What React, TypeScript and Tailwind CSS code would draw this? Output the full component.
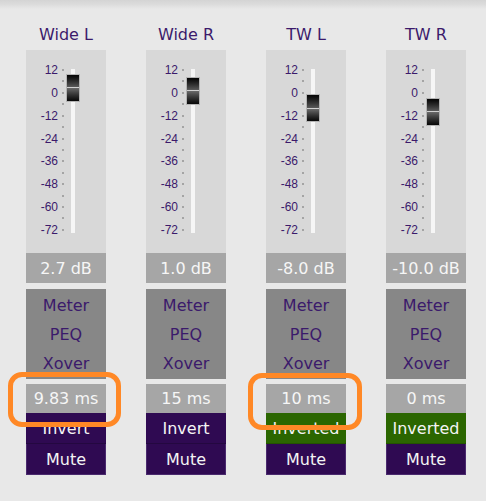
import React from 'react';

interface Channel {
  name: string;
  gain: number;
  delay: string;
  inverted: boolean;
}

const channels: Channel[] = [
  { name: 'Wide L', gain: 2.7, delay: '9.83 ms', inverted: false },
  { name: 'Wide R', gain: 1.0, delay: '15 ms', inverted: false },
  { name: 'TW L', gain: -8.0, delay: '10 ms', inverted: true },
  { name: 'TW R', gain: -10.0, delay: '0 ms', inverted: true },
];

const ticks = Array.from({ length: 15 }, (_, i) => (i % 2 === 0 ? String(12 - i * 6) : null));

const SCALE_H = 160;

function Fader({ gain }: { gain: number }) {
  // 12 dB at top, -72 dB at bottom
  const y = ((12 - gain) / 84) * SCALE_H;
  return (
    <div className="h-[203px] w-[80px] bg-[#d8d8d8] pt-[20px]">
      <div className="flex">
        <div className="flex h-[160px] w-[38px] flex-col justify-between">
          {ticks.map((label, i) => (
            <div key={i} className="flex h-0 items-center justify-end">
              {label && (
                <span className="mr-[4px] text-[12px] leading-none text-[#3b1a6b] [font-family:'Liberation_Sans',Arial,sans-serif]">
                  {label}
                </span>
              )}
              <span className="h-[2px] w-[2px] bg-[#a4a4a4]" />
            </div>
          ))}
        </div>
        <div className="relative ml-[7px] -mt-[1px] h-[164px] w-[4px] bg-[#f6f6f6]">
          <div
            className="absolute left-[-5px] flex h-[28px] w-[14px] flex-col border border-[#b4b4b4]"
            style={{ top: y + 1 - 14 }}
          >
            <div className="flex-1 bg-gradient-to-b from-[#050505] to-[#5a5a5a]" />
            <div className="h-[1px] bg-[#d0d0d0]" />
            <div className="flex-1 bg-gradient-to-b from-[#6a6a6a] to-[#080808]" />
          </div>
        </div>
      </div>
    </div>
  );
}

function Strip({ ch }: { ch: Channel }) {
  return (
    <div className="flex w-[120px] flex-col items-center">
      <div className="flex h-[50px] items-center pt-[20px] text-[16px] text-[#3b1a6b]">{ch.name}</div>
      <Fader gain={ch.gain} />
      <div className="flex h-[30px] w-[80px] items-center justify-center pt-[1px] bg-[#a6a6a6] text-[16px] text-[#f6f6f6]">
        {ch.gain.toFixed(1)} dB
      </div>
      <div className="mt-[6px] flex h-[90px] w-[80px] flex-col bg-[#878787] pt-[2px] text-[16px] text-[#3b1a6b]">
        {['Meter', 'PEQ', 'Xover'].map((b) => (
          <div key={b} className="flex h-[30px] items-center justify-center">
            {b}
          </div>
        ))}
      </div>
      <div className="mt-[5px] flex h-[29px] w-[80px] items-center justify-center pt-[1px] bg-[#a6a6a6] text-[16px] text-[#f6f6f6]">
        {ch.delay}
      </div>
      <div
        className={
          ch.inverted
            ? 'flex h-[31px] w-[80px] items-center justify-center border-b border-[#245400] bg-[#2b6600] pt-[1px] text-[16px] text-[#f4f4f4]'
            : 'flex h-[31px] w-[80px] items-center justify-center border-b border-[#240840] bg-[#2f0a52] pt-[1px] text-[16px] text-[#f4f4f4]'
        }
      >
        {ch.inverted ? 'Inverted' : 'Invert'}
      </div>
      <div className="flex h-[31px] w-[80px] items-center justify-center border-x border-b border-[#4a2a6e] bg-[#2f0a52] pt-[1px] text-[16px] text-[#f4f4f4]">
        Mute
      </div>
    </div>
  );
}

export default function App() {
  return (
    <div className="relative h-[501px] w-[486px] overflow-hidden bg-[#e8e8e8] [font-family:'DejaVu_Sans',Verdana,sans-serif]">
      <div className="absolute inset-x-0 top-0 h-[9px] bg-gradient-to-b from-[#d4d4d4] via-[#dcdcdc] to-[#e8e8e8]" />
      <div className="relative flex pl-[6px]">
        {channels.map((ch) => (
          <Strip key={ch.name} ch={ch} />
        ))}
      </div>
      {/* highlight annotations */}
      <div className="absolute left-[8px] top-[372px] h-[55px] w-[113px] rounded-[14px] border-[5px] border-[#ff8826]" />
      <div className="absolute left-[248px] top-[373px] h-[57px] w-[114px] rounded-[14px] border-[5px] border-[#ff8826]" />
    </div>
  );
}
